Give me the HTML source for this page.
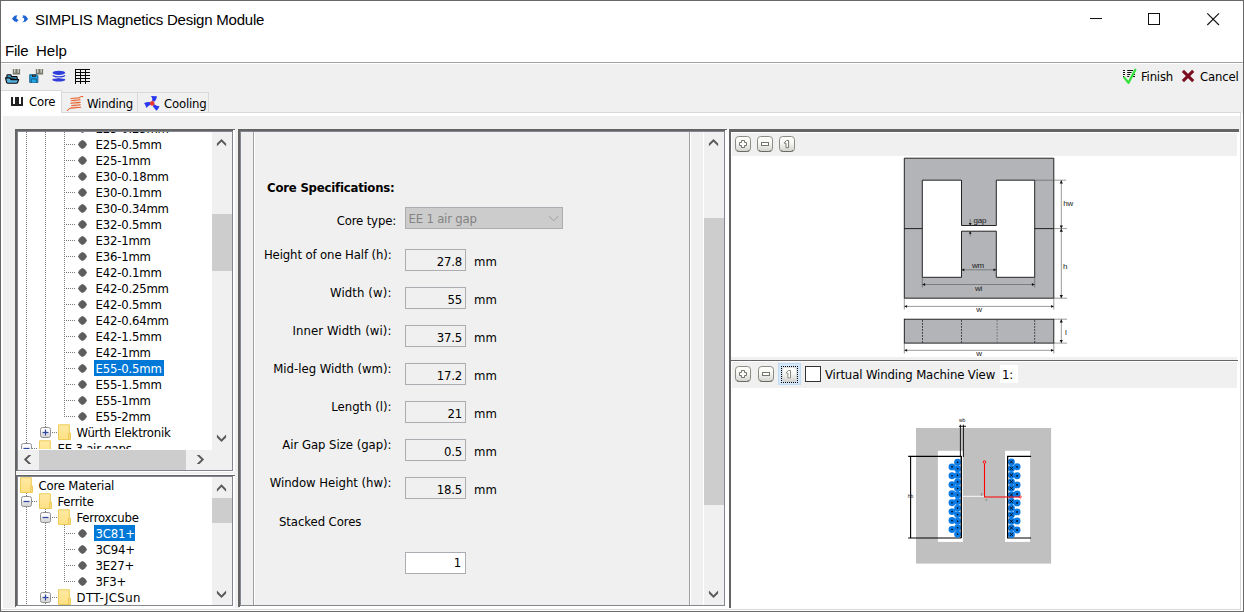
<!DOCTYPE html>
<html><head><meta charset="utf-8"><title>SIMPLIS Magnetics Design Module</title>
<style>
*{box-sizing:border-box;margin:0;padding:0}
html,body{width:1244px;height:612px;overflow:hidden;background:#f0f0f0}
body{position:relative;font-family:"DejaVu Sans Condensed","DejaVu Sans","Liberation Sans",sans-serif;font-stretch:condensed;font-size:13px;color:#000;letter-spacing:-0.2px}
.a{position:absolute}
.t{position:absolute;white-space:nowrap;line-height:16px;height:16px}
.ui{font-family:"Liberation Sans",sans-serif;font-size:15px;letter-spacing:-0.22px}
/* window */
#titlebar{left:1px;top:1px;width:1242px;height:61px;background:#fff}
#menuline{left:1px;top:62px;width:1242px;height:1px;background:#a0a0a0}
#bt{left:0;top:0;width:1244px;height:1px;background:#686868}
#bl{left:0;top:0;width:1px;height:612px;background:#686868}
#br{left:1243px;top:0;width:1px;height:612px;background:#686868}
#bb{left:0;top:611px;width:1244px;height:1px;background:#686868}

.vd{width:1px;background:repeating-linear-gradient(to bottom,#7a7a7a 0,#7a7a7a 1px,transparent 1px,transparent 2px)}
.hd{height:1px;background:repeating-linear-gradient(to right,#7a7a7a 0,#7a7a7a 1px,transparent 1px,transparent 2px)}
.sel{background:#0078d7;color:#fff}
.dk{background:#646464}.bl{background:#828790}.wh{background:#fff}
.sb{background:#f0f0f0}.th{background:#cdcdcd}
.r{text-align:right}
.inp{width:61px;height:22px;border:1px solid #abadb3;background:#f0f0f0}
</style></head><body>
<div class="a" id="titlebar"></div>
<div class="a" id="menuline"></div><div class="a wh" style="left:1px;top:63px;width:1242px;height:1px"></div>
<div class="t ui" style="left:35px;top:12px">SIMPLIS Magnetics Design Module</div>
<div class="t ui" style="left:5px;top:43px">File</div>
<div class="t ui" style="left:36px;top:43px;letter-spacing:0">Help</div>

<svg class="a" style="left:10px;top:12px" width="22" height="14" viewBox="10 12 22 14">
 <path d="M17.600 15.200L14.500 15.800L12 18.700L14.300 21.300L17.800 22.600L16.800 21.300L18.700 20.400L16.500 18.600Q15.800 17 17.600 15.200Z" fill="#1e64d2"/>
 <path d="M22.500 15.200L25.600 15.800L28.100 18.900L25.800 21.500L22.200 22.600Q24.800 20.800 24.200 18.800Q23.800 17.400 21.800 17.300L23.200 16.400Z" fill="#1e64d2"/>
</svg>
<svg class="a" style="left:1080px;top:8px" width="150" height="24" viewBox="1080 8 150 24">
 <path d="M1090 18.500H1102" stroke="#111" stroke-width="1"/>
 <rect x="1148.500" y="13.500" width="11" height="11" fill="none" stroke="#111" stroke-width="1"/>
 <path d="M1207.300 13.300L1219 25M1219 13.300L1207.300 25" stroke="#111" stroke-width="1.100"/>
</svg>
<!-- toolbar icons -->
<svg class="a" style="left:4px;top:67px" width="90" height="19" viewBox="4 67 90 19">
 <!-- open -->
 <g>
  <path d="M12.800 69h1.500v3.800h1v-3.800h2.300v3.800h1v-3.800h1.500v5.600h-7.300z" fill="#77776b"/>
  <path d="M6.900 78v-2.400q0-.9.900-.9h2.500q.9 0 1 .9l.1 1h5q.8 0 .8.800v2.200z" fill="#3f9dcc" stroke="#0c0c0c" stroke-width="1.100"/>
  <path d="M5.500 77.900h4.500l.9 1.700h7.800l-1.100 2.900q-.3.800-1.100.8h-8.500q-1 0-1.300-.8z" fill="#56aedb" stroke="#0c0c0c" stroke-width="1.100" stroke-linejoin="round"/>
 </g>
 <!-- save -->
 <g>
  <path d="M35.800 69h1.500v3.800h1v-3.800h2.300v3.800h1v-3.800h1.500v5.600h-7.300z" fill="#77776b"/>
  <path d="M29.700 74.700h7.200l1 1v6.800h-8.200z" fill="#1e9cdb" stroke="#145f88" stroke-width=".9"/>
  <rect x="32" y="74.700" width="3.800" height="2.100" fill="#1c1c1c"/>
  <rect x="33.300" y="75" width="1.200" height="1.300" fill="#777"/>
  <path d="M31.500 82.500v-3.500h4.800v3.500" fill="#25a6e6" stroke="#145f88" stroke-width=".9"/>
 </g>
 <!-- db -->
 <g fill="#2f3fdc">
  <ellipse cx="58.900" cy="72.800" rx="6.300" ry="2.150"/>
  <path d="M52.600 74.900q6.300 2.700 12.500 0l0 1.400q-6.200 3.400-12.500 0z"/>
  <ellipse cx="58.800" cy="79.800" rx="6.500" ry="1.750"/>
 </g>
 <path d="M53.500 78.400q5.300-1.600 10.600 0" fill="none" stroke="#f0f0f0" stroke-width=".7"/>
 <!-- grid -->
 <g fill="#050505" shape-rendering="crispEdges">
  <rect x="75" y="69" width="15" height="1"/><rect x="75" y="72" width="15" height="1"/><rect x="75" y="75" width="15" height="1"/><rect x="75" y="78" width="15" height="1"/><rect x="75" y="81" width="15" height="1"/>
  <rect x="75" y="69" width="1" height="15"/><rect x="80" y="69" width="1" height="15"/><rect x="85" y="69" width="1" height="15"/>
 </g>
</svg>
<!-- finish / cancel -->
<svg class="a" style="left:1120px;top:67px" width="80" height="19" viewBox="1120 67 80 19">
 <path d="M1123 70.500h2M1127.200 70.500h5.800M1123 72.500h2M1127.200 72.500h4.300M1123 74.500h2M1127.200 74.500h3M1133.500 74.500h1.500M1123 76.500h1.200M1127.200 76.500h2M1132.500 76.500h2.500" stroke="#111" stroke-width="1"/>
 <path d="M1124.300 77.600l4.200 5.200 6.800-13" fill="none" stroke="#35e23a" stroke-width="2.300" stroke-linejoin="round" stroke-linecap="round"/>
 <path d="M1182.900 70.900l10.300 10.200M1193.200 70.900l-10.300 10.200" stroke="#7a0e20" stroke-width="3"/>
</svg>
<div class="t" style="left:1141px;top:69px">Finish</div>
<div class="t" style="left:1200px;top:69px">Cancel</div>


<!-- tab pane -->
<div class="a" style="left:1px;top:112px;width:1240px;height:498px;background:#fff;border-right:1px solid #d9d9d9;border-bottom:1px solid #d9d9d9;border-top:1px solid #d9d9d9"></div>
<div class="a" style="left:3px;top:116px;width:1237px;height:492px;background:#f0f0f0"></div>
<div class="a wh" style="left:1241px;top:113px;width:2px;height:498px"></div><div class="a wh" style="left:1px;top:610px;width:1242px;height:1px"></div>
<!-- tabs -->
<div class="a" style="left:1px;top:90px;width:61px;height:23px;background:#fff;border-top:1px solid #d9d9d9;border-right:1px solid #d9d9d9"></div>
<div class="a" style="left:62px;top:92px;width:76px;height:20px;border-top:1px solid #d9d9d9;border-right:1px solid #d9d9d9"></div>
<div class="a" style="left:138px;top:92px;width:71px;height:20px;border-top:1px solid #d9d9d9;border-right:1px solid #d9d9d9"></div>
<svg class="a" style="left:10px;top:95px" width="152" height="17" viewBox="10 95 152 17">
 <path d="M11 97h2v7h2v-7h4v7h2v-7h2v9h-12z" fill="#222"/>
 <g fill="none" stroke="#e8632f" stroke-width="1.100" stroke-linecap="round">
  <path d="M70.800 98.500L79.300 97.700Q80.200 96.100 82.800 96.600M71.200 100.700L80 99.700M70.900 103.300L80.200 102.400M71.600 105.700L80.200 104.800M71 108.100L80.700 107.300M71.500 107.800Q69.300 108.300 67.400 110.500"/>
  <path d="M79.500 97.900L71.200 100.500M80 99.900L71 103.100M80.200 102.600L71.600 105.500M80.200 105L71 107.900" opacity=".28"/>
 </g>
 <g fill="#2c38ee">
  <path d="M150.900 96.100L157 96.200Q156.800 98.600 154.800 101.600L152.300 101.200Q153.300 98.500 150.900 96.100Z"/>
  <path d="M144.100 102.900Q147 101.800 149.900 102L150.600 104.700Q148 105.600 146.500 108.100Q145.800 105.300 144.100 102.900Z"/>
  <path d="M154.500 104.200Q156.500 106.200 159.500 106.300Q158.500 109 156.400 110.800Q154.500 108.300 152.700 106.300Z"/>
 </g>
 <circle cx="152.200" cy="103.400" r="2.300" fill="#ea3333"/>
</svg>
<div class="t" style="left:29px;top:94px">Core</div>
<div class="t" style="left:87px;top:96px">Winding</div>
<div class="t" style="left:164px;top:96px">Cooling</div>

<svg width="0" height="0" style="position:absolute"><defs>
<linearGradient id="fg" x1="0" y1="0" x2="0" y2="1"><stop offset="0" stop-color="#ffeaa4"/><stop offset="1" stop-color="#ffe083"/></linearGradient>
<linearGradient id="bg" x1="0" y1="0" x2="0" y2="1"><stop offset="0" stop-color="#ffffff"/><stop offset=".5" stop-color="#f4f4f4"/><stop offset=".55" stop-color="#e2e2e2"/><stop offset="1" stop-color="#d4d4d4"/></linearGradient>
<linearGradient id="btn" x1="0" y1="0" x2="0" y2="1"><stop offset="0" stop-color="#ffffff"/><stop offset=".45" stop-color="#f6f6f4"/><stop offset="1" stop-color="#d2d2ce"/></linearGradient>
</defs></svg>

<!-- left frames -->
<div class="a dk" style="left:15px;top:129px;width:220px;height:1px"></div>
<div class="a dk" style="left:15px;top:130px;width:218px;height:1px"></div>
<div class="a dk" style="left:15px;top:129px;width:1px;height:478px"></div>
<div class="a dk" style="left:16px;top:129px;width:1px;height:342px"></div>
<div class="a dk" style="left:16px;top:475px;width:1px;height:132px"></div>
<div class="a wh" style="left:233px;top:130px;width:2px;height:478px"></div>
<div class="a wh" style="left:16px;top:471px;width:219px;height:1px"></div>
<div class="a" style="left:16px;top:472px;width:219px;height:2px;background:#f0f0f0"></div>
<div class="a wh" style="left:16px;top:474px;width:219px;height:1px"></div>
<div class="a dk" style="left:15px;top:475px;width:220px;height:1px"></div>
<div class="a wh" style="left:16px;top:606px;width:219px;height:2px"></div>
<div class="a" style="left:17px;top:131px;width:216px;height:340px;border:1px solid #828790;background:#fff"></div>
<div class="a" style="left:17px;top:476px;width:216px;height:130px;border:1px solid #828790;background:#fff"></div>
<div class="a" style="left:18px;top:132px;width:194px;height:317px;background:#fff;overflow:hidden">
<div class="a hd" style="left:46px;top:-4px;width:12px"></div>
<svg class="a" style="left:60px;top:-8px" width="9" height="9" viewBox="0 0 9 9"><circle cx="4.500" cy="4.500" r="3.700" fill="#5e5e5e"/><path d="M4.500 .2v8.600M.2 4.500h8.600" stroke="#5e5e5e" stroke-width="2.200"/></svg>
<div class="t" style="left:77.5px;top:-11px">E25-0.25mm</div>
<div class="a hd" style="left:46px;top:12px;width:12px"></div>
<svg class="a" style="left:60px;top:8px" width="9" height="9" viewBox="0 0 9 9"><circle cx="4.500" cy="4.500" r="3.700" fill="#5e5e5e"/><path d="M4.500 .2v8.600M.2 4.500h8.600" stroke="#5e5e5e" stroke-width="2.200"/></svg>
<div class="t" style="left:77.5px;top:5px">E25-0.5mm</div>
<div class="a hd" style="left:46px;top:28px;width:12px"></div>
<svg class="a" style="left:60px;top:24px" width="9" height="9" viewBox="0 0 9 9"><circle cx="4.500" cy="4.500" r="3.700" fill="#5e5e5e"/><path d="M4.500 .2v8.600M.2 4.500h8.600" stroke="#5e5e5e" stroke-width="2.200"/></svg>
<div class="t" style="left:77.5px;top:21px">E25-1mm</div>
<div class="a hd" style="left:46px;top:44px;width:12px"></div>
<svg class="a" style="left:60px;top:40px" width="9" height="9" viewBox="0 0 9 9"><circle cx="4.500" cy="4.500" r="3.700" fill="#5e5e5e"/><path d="M4.500 .2v8.600M.2 4.500h8.600" stroke="#5e5e5e" stroke-width="2.200"/></svg>
<div class="t" style="left:77.5px;top:37px">E30-0.18mm</div>
<div class="a hd" style="left:46px;top:60px;width:12px"></div>
<svg class="a" style="left:60px;top:56px" width="9" height="9" viewBox="0 0 9 9"><circle cx="4.500" cy="4.500" r="3.700" fill="#5e5e5e"/><path d="M4.500 .2v8.600M.2 4.500h8.600" stroke="#5e5e5e" stroke-width="2.200"/></svg>
<div class="t" style="left:77.5px;top:53px">E30-0.1mm</div>
<div class="a hd" style="left:46px;top:76px;width:12px"></div>
<svg class="a" style="left:60px;top:72px" width="9" height="9" viewBox="0 0 9 9"><circle cx="4.500" cy="4.500" r="3.700" fill="#5e5e5e"/><path d="M4.500 .2v8.600M.2 4.500h8.600" stroke="#5e5e5e" stroke-width="2.200"/></svg>
<div class="t" style="left:77.5px;top:69px">E30-0.34mm</div>
<div class="a hd" style="left:46px;top:92px;width:12px"></div>
<svg class="a" style="left:60px;top:88px" width="9" height="9" viewBox="0 0 9 9"><circle cx="4.500" cy="4.500" r="3.700" fill="#5e5e5e"/><path d="M4.500 .2v8.600M.2 4.500h8.600" stroke="#5e5e5e" stroke-width="2.200"/></svg>
<div class="t" style="left:77.5px;top:85px">E32-0.5mm</div>
<div class="a hd" style="left:46px;top:108px;width:12px"></div>
<svg class="a" style="left:60px;top:104px" width="9" height="9" viewBox="0 0 9 9"><circle cx="4.500" cy="4.500" r="3.700" fill="#5e5e5e"/><path d="M4.500 .2v8.600M.2 4.500h8.600" stroke="#5e5e5e" stroke-width="2.200"/></svg>
<div class="t" style="left:77.5px;top:101px">E32-1mm</div>
<div class="a hd" style="left:46px;top:124px;width:12px"></div>
<svg class="a" style="left:60px;top:120px" width="9" height="9" viewBox="0 0 9 9"><circle cx="4.500" cy="4.500" r="3.700" fill="#5e5e5e"/><path d="M4.500 .2v8.600M.2 4.500h8.600" stroke="#5e5e5e" stroke-width="2.200"/></svg>
<div class="t" style="left:77.5px;top:117px">E36-1mm</div>
<div class="a hd" style="left:46px;top:140px;width:12px"></div>
<svg class="a" style="left:60px;top:136px" width="9" height="9" viewBox="0 0 9 9"><circle cx="4.500" cy="4.500" r="3.700" fill="#5e5e5e"/><path d="M4.500 .2v8.600M.2 4.500h8.600" stroke="#5e5e5e" stroke-width="2.200"/></svg>
<div class="t" style="left:77.5px;top:133px">E42-0.1mm</div>
<div class="a hd" style="left:46px;top:156px;width:12px"></div>
<svg class="a" style="left:60px;top:152px" width="9" height="9" viewBox="0 0 9 9"><circle cx="4.500" cy="4.500" r="3.700" fill="#5e5e5e"/><path d="M4.500 .2v8.600M.2 4.500h8.600" stroke="#5e5e5e" stroke-width="2.200"/></svg>
<div class="t" style="left:77.5px;top:149px">E42-0.25mm</div>
<div class="a hd" style="left:46px;top:172px;width:12px"></div>
<svg class="a" style="left:60px;top:168px" width="9" height="9" viewBox="0 0 9 9"><circle cx="4.500" cy="4.500" r="3.700" fill="#5e5e5e"/><path d="M4.500 .2v8.600M.2 4.500h8.600" stroke="#5e5e5e" stroke-width="2.200"/></svg>
<div class="t" style="left:77.5px;top:165px">E42-0.5mm</div>
<div class="a hd" style="left:46px;top:188px;width:12px"></div>
<svg class="a" style="left:60px;top:184px" width="9" height="9" viewBox="0 0 9 9"><circle cx="4.500" cy="4.500" r="3.700" fill="#5e5e5e"/><path d="M4.500 .2v8.600M.2 4.500h8.600" stroke="#5e5e5e" stroke-width="2.200"/></svg>
<div class="t" style="left:77.5px;top:181px">E42-0.64mm</div>
<div class="a hd" style="left:46px;top:204px;width:12px"></div>
<svg class="a" style="left:60px;top:200px" width="9" height="9" viewBox="0 0 9 9"><circle cx="4.500" cy="4.500" r="3.700" fill="#5e5e5e"/><path d="M4.500 .2v8.600M.2 4.500h8.600" stroke="#5e5e5e" stroke-width="2.200"/></svg>
<div class="t" style="left:77.5px;top:197px">E42-1.5mm</div>
<div class="a hd" style="left:46px;top:220px;width:12px"></div>
<svg class="a" style="left:60px;top:216px" width="9" height="9" viewBox="0 0 9 9"><circle cx="4.500" cy="4.500" r="3.700" fill="#5e5e5e"/><path d="M4.500 .2v8.600M.2 4.500h8.600" stroke="#5e5e5e" stroke-width="2.200"/></svg>
<div class="t" style="left:77.5px;top:213px">E42-1mm</div>
<div class="a hd" style="left:46px;top:236px;width:12px"></div>
<svg class="a" style="left:60px;top:232px" width="9" height="9" viewBox="0 0 9 9"><circle cx="4.500" cy="4.500" r="3.700" fill="#5e5e5e"/><path d="M4.500 .2v8.600M.2 4.500h8.600" stroke="#5e5e5e" stroke-width="2.200"/></svg>
<div class="a sel" style="left:76px;top:228px;width:70px;height:16px"></div><div class="t" style="left:77.5px;top:229px;color:#fff">E55-0.5mm</div>
<div class="a hd" style="left:46px;top:252px;width:12px"></div>
<svg class="a" style="left:60px;top:248px" width="9" height="9" viewBox="0 0 9 9"><circle cx="4.500" cy="4.500" r="3.700" fill="#5e5e5e"/><path d="M4.500 .2v8.600M.2 4.500h8.600" stroke="#5e5e5e" stroke-width="2.200"/></svg>
<div class="t" style="left:77.5px;top:245px">E55-1.5mm</div>
<div class="a hd" style="left:46px;top:268px;width:12px"></div>
<svg class="a" style="left:60px;top:264px" width="9" height="9" viewBox="0 0 9 9"><circle cx="4.500" cy="4.500" r="3.700" fill="#5e5e5e"/><path d="M4.500 .2v8.600M.2 4.500h8.600" stroke="#5e5e5e" stroke-width="2.200"/></svg>
<div class="t" style="left:77.5px;top:261px">E55-1mm</div>
<div class="a hd" style="left:46px;top:284px;width:12px"></div>
<svg class="a" style="left:60px;top:280px" width="9" height="9" viewBox="0 0 9 9"><circle cx="4.500" cy="4.500" r="3.700" fill="#5e5e5e"/><path d="M4.500 .2v8.600M.2 4.500h8.600" stroke="#5e5e5e" stroke-width="2.200"/></svg>
<div class="t" style="left:77.5px;top:277px">E55-2mm</div>
<div class="a vd" style="left:8px;top:0px;height:317px"></div>
<div class="a vd" style="left:27px;top:0px;height:295px"></div>
<div class="a vd" style="left:46px;top:0px;height:285px"></div>
<svg class="a" style="left:22px;top:295px" width="11" height="11" viewBox="0 0 11 11"><rect x=".5" y=".5" width="10" height="10" rx="2" fill="url(#bg)" stroke="#8f8f8f"/><path d="M2.500 5.500h6" stroke="#2c47a0" stroke-width="1.200"/><path d="M5.500 2.500v6" stroke="#2c47a0" stroke-width="1.200"/></svg>
<div class="a hd" style="left:34px;top:300px;width:5px"></div>
<svg class="a" style="left:40px;top:292px" width="13" height="16" viewBox="0 0 13 16"><path d="M.5.800h10.800v8.500h1.200v6.200h-12z" fill="url(#fg)" stroke="#edcb58" stroke-width="1"/><path d="M10.700 15.300v-5.300q0-.7.800-.7h.8" fill="none" stroke="#e9c550" stroke-width="1"/></svg>
<div class="t" style="left:58.5px;top:293px">Würth Elektronik</div>
<svg class="a" style="left:3px;top:311px" width="11" height="11" viewBox="0 0 11 11"><rect x=".5" y=".5" width="10" height="10" rx="2" fill="url(#bg)" stroke="#8f8f8f"/><path d="M2.500 5.500h6" stroke="#2c47a0" stroke-width="1.200"/></svg>
<div class="a hd" style="left:14px;top:316px;width:6px"></div>
<svg class="a" style="left:21px;top:308px" width="13" height="16" viewBox="0 0 13 16"><path d="M.5.800h10.800v8.500h1.200v6.200h-12z" fill="url(#fg)" stroke="#edcb58" stroke-width="1"/><path d="M10.700 15.300v-5.300q0-.7.800-.7h.8" fill="none" stroke="#e9c550" stroke-width="1"/></svg>
<div class="t" style="left:39.5px;top:309px">EE 3 air gaps</div>
</div>
<div class="a" style="left:18px;top:477px;width:194px;height:128px;background:#fff;overflow:hidden">
<svg class="a" style="left:2px;top:0px" width="13" height="16" viewBox="0 0 13 16"><path d="M.5.800h10.800v8.500h1.200v6.200h-12z" fill="url(#fg)" stroke="#edcb58" stroke-width="1"/><path d="M10.700 15.300v-5.300q0-.7.800-.7h.8" fill="none" stroke="#e9c550" stroke-width="1"/></svg>
<div class="t" style="left:20.5px;top:1px">Core Material</div>
<div class="a vd" style="left:8px;top:16px;height:3px"></div>
<svg class="a" style="left:3px;top:19px" width="11" height="11" viewBox="0 0 11 11"><rect x=".5" y=".5" width="10" height="10" rx="2" fill="url(#bg)" stroke="#8f8f8f"/><path d="M2.500 5.500h6" stroke="#2c47a0" stroke-width="1.200"/></svg>
<div class="a hd" style="left:14px;top:24px;width:6px"></div>
<svg class="a" style="left:21px;top:16px" width="13" height="16" viewBox="0 0 13 16"><path d="M.5.800h10.800v8.500h1.200v6.200h-12z" fill="url(#fg)" stroke="#edcb58" stroke-width="1"/><path d="M10.700 15.300v-5.300q0-.7.800-.7h.8" fill="none" stroke="#e9c550" stroke-width="1"/></svg>
<div class="t" style="left:39.5px;top:17px">Ferrite</div>
<div class="a vd" style="left:8px;top:30px;height:98px"></div>
<div class="a vd" style="left:27px;top:32px;height:3px"></div>
<svg class="a" style="left:22px;top:35px" width="11" height="11" viewBox="0 0 11 11"><rect x=".5" y=".5" width="10" height="10" rx="2" fill="url(#bg)" stroke="#8f8f8f"/><path d="M2.500 5.500h6" stroke="#2c47a0" stroke-width="1.200"/></svg>
<div class="a hd" style="left:34px;top:40px;width:5px"></div>
<svg class="a" style="left:40px;top:32px" width="13" height="16" viewBox="0 0 13 16"><path d="M.5.800h10.800v8.500h1.200v6.200h-12z" fill="url(#fg)" stroke="#edcb58" stroke-width="1"/><path d="M10.700 15.300v-5.300q0-.7.800-.7h.8" fill="none" stroke="#e9c550" stroke-width="1"/></svg>
<div class="t" style="left:58.5px;top:33px">Ferroxcube</div>
<div class="a vd" style="left:27px;top:46px;height:69px"></div>
<div class="a hd" style="left:46px;top:56px;width:12px"></div>
<svg class="a" style="left:60px;top:52px" width="9" height="9" viewBox="0 0 9 9"><circle cx="4.500" cy="4.500" r="3.700" fill="#5e5e5e"/><path d="M4.500 .2v8.600M.2 4.500h8.600" stroke="#5e5e5e" stroke-width="2.200"/></svg>
<div class="a sel" style="left:76px;top:48px;width:41px;height:16px"></div><div class="t" style="left:77.5px;top:49px;color:#fff">3C81+</div>
<div class="a hd" style="left:46px;top:72px;width:12px"></div>
<svg class="a" style="left:60px;top:68px" width="9" height="9" viewBox="0 0 9 9"><circle cx="4.500" cy="4.500" r="3.700" fill="#5e5e5e"/><path d="M4.500 .2v8.600M.2 4.500h8.600" stroke="#5e5e5e" stroke-width="2.200"/></svg>
<div class="t" style="left:77.5px;top:65px">3C94+</div>
<div class="a hd" style="left:46px;top:88px;width:12px"></div>
<svg class="a" style="left:60px;top:84px" width="9" height="9" viewBox="0 0 9 9"><circle cx="4.500" cy="4.500" r="3.700" fill="#5e5e5e"/><path d="M4.500 .2v8.600M.2 4.500h8.600" stroke="#5e5e5e" stroke-width="2.200"/></svg>
<div class="t" style="left:77.5px;top:81px">3E27+</div>
<div class="a hd" style="left:46px;top:104px;width:12px"></div>
<svg class="a" style="left:60px;top:100px" width="9" height="9" viewBox="0 0 9 9"><circle cx="4.500" cy="4.500" r="3.700" fill="#5e5e5e"/><path d="M4.500 .2v8.600M.2 4.500h8.600" stroke="#5e5e5e" stroke-width="2.200"/></svg>
<div class="t" style="left:77.5px;top:97px">3F3+</div>
<div class="a vd" style="left:46px;top:48px;height:57px"></div>
<svg class="a" style="left:22px;top:115px" width="11" height="11" viewBox="0 0 11 11"><rect x=".5" y=".5" width="10" height="10" rx="2" fill="url(#bg)" stroke="#8f8f8f"/><path d="M2.500 5.500h6" stroke="#2c47a0" stroke-width="1.200"/><path d="M5.500 2.500v6" stroke="#2c47a0" stroke-width="1.200"/></svg>
<div class="a hd" style="left:34px;top:120px;width:5px"></div>
<svg class="a" style="left:40px;top:112px" width="13" height="16" viewBox="0 0 13 16"><path d="M.5.800h10.800v8.500h1.200v6.200h-12z" fill="url(#fg)" stroke="#edcb58" stroke-width="1"/><path d="M10.700 15.300v-5.300q0-.7.800-.7h.8" fill="none" stroke="#e9c550" stroke-width="1"/></svg>
<div class="t" style="letter-spacing:.4px;left:58.5px;top:113px">DTT-JCSun</div>
<div class="a vd" style="left:27px;top:126px;height:2px"></div>
</div>
<!-- scrollbars -->
<div class="a sb" style="left:212px;top:132px;width:20px;height:338px"></div>
<div class="a th" style="left:212px;top:214px;width:20px;height:57px"></div>
<div class="a sb" style="left:18px;top:450px;width:194px;height:20px"></div>
<div class="a th" style="left:39px;top:450px;width:147px;height:20px"></div>
<div class="a sb" style="left:212px;top:477px;width:20px;height:128px"></div>
<div class="a th" style="left:212px;top:498px;width:20px;height:25px"></div>
<!-- middle panel -->
<div class="a wh" style="left:725px;top:129px;width:4px;height:3px"></div><div class="a dk" style="left:238px;top:129px;width:489px;height:1px"></div><div class="a dk" style="left:238px;top:130px;width:487px;height:1px"></div>
<div class="a dk" style="left:238px;top:129px;width:2px;height:478px"></div>
<div class="a wh" style="left:725px;top:131px;width:4px;height:477px"></div>
<div class="a wh" style="left:240px;top:606px;width:489px;height:2px"></div>
<div class="a" style="left:240px;top:131px;width:485px;height:475px;border:1px solid #828790;background:#f0f0f0"></div>
<div class="a" style="left:253px;top:132px;width:1px;height:473px;background:#a0a0a0"></div>
<div class="a wh" style="left:254px;top:132px;width:1px;height:473px"></div>
<div class="a" style="left:689px;top:132px;width:1px;height:473px;background:#a0a0a0"></div>
<div class="a wh" style="left:690px;top:132px;width:1px;height:473px"></div>
<div class="a wh" style="left:703px;top:132px;width:1px;height:473px"></div>
<div class="a th" style="left:704px;top:218px;width:20px;height:287px"></div>
<!-- form -->
<div class="t" style="left:267px;top:180px;font-weight:bold">Core Specifications:</div>
<div class="t r" style="left:255px;width:141px;top:213px;letter-spacing:-0.15px">Core type:</div>
<div class="a" style="left:405px;top:207px;width:158px;height:22px;background:#cccccc;border:1px solid #abadb3"></div>
<div class="t" style="left:408.500px;top:211px;color:#838383">EE 1 air gap</div>
<svg class="a" style="left:547px;top:214px" width="13" height="9" viewBox="547 214 13 9"><path d="M549 216.200l4.600 4.600 4.600-4.600" fill="none" stroke="#9e9e9e" stroke-width="1"/></svg>
<!-- rows -->
<div class="t r" style="left:255px;width:136.500px;top:246.5px;letter-spacing:-0.12px">Height of one Half (h):</div>
<div class="a inp" style="left:405px;top:249px"></div><div class="t r" style="left:405px;width:57px;top:253.5px">27.8</div>
<div class="t" style="left:474px;top:253.5px;letter-spacing:0">mm</div>
<div class="t r" style="left:255px;width:136.500px;top:284.5px;letter-spacing:0.12px">Width (w):</div>
<div class="a inp" style="left:405px;top:287px"></div><div class="t r" style="left:405px;width:57px;top:291.5px">55</div>
<div class="t" style="left:474px;top:291.5px;letter-spacing:0">mm</div>
<div class="t r" style="left:255px;width:136.500px;top:322.5px;letter-spacing:0.09px">Inner Width (wi):</div>
<div class="a inp" style="left:405px;top:325px"></div><div class="t r" style="left:405px;width:57px;top:329.5px">37.5</div>
<div class="t" style="left:474px;top:329.5px;letter-spacing:0">mm</div>
<div class="t r" style="left:255px;width:136.500px;top:360.5px;letter-spacing:0px">Mid-leg Width (wm):</div>
<div class="a inp" style="left:405px;top:363px"></div><div class="t r" style="left:405px;width:57px;top:367.5px">17.2</div>
<div class="t" style="left:474px;top:367.5px;letter-spacing:0">mm</div>
<div class="t r" style="left:255px;width:136.500px;top:398.5px;letter-spacing:-0.02px">Length (l):</div>
<div class="a inp" style="left:405px;top:401px"></div><div class="t r" style="left:405px;width:57px;top:405.5px">21</div>
<div class="t" style="left:474px;top:405.5px;letter-spacing:0">mm</div>
<div class="t r" style="left:255px;width:136.500px;top:436.5px;letter-spacing:-0.04px">Air Gap Size (gap):</div>
<div class="a inp" style="left:405px;top:439px"></div><div class="t r" style="left:405px;width:57px;top:443.5px">0.5</div>
<div class="t" style="left:474px;top:443.5px;letter-spacing:0">mm</div>
<div class="t r" style="left:255px;width:136.500px;top:474.5px;letter-spacing:-0.02px">Window Height (hw):</div>
<div class="a inp" style="left:405px;top:477px"></div><div class="t r" style="left:405px;width:57px;top:481.5px">18.5</div>
<div class="t" style="left:474px;top:481.5px;letter-spacing:0">mm</div>
<div class="t" style="left:279px;top:513.500px;letter-spacing:-0.08px">Stacked Cores</div>
<div class="a inp" style="left:405px;top:552px;background:#fff"></div><div class="t r" style="left:405px;width:56px;top:555px">1</div>
<!-- right panel -->
<div class="a wh" style="left:731px;top:132px;width:509px;height:476px"></div>
<div class="a dk" style="left:729px;top:129px;width:510px;height:3px"></div>
<div class="a dk" style="left:729px;top:129px;width:2px;height:479px"></div>
<div class="a" style="left:732px;top:133px;width:505px;height:23px;background:#f0f0f0"></div>
<div class="a" style="left:731px;top:357px;width:506px;height:3px;background:#f0f0f0"></div>
<div class="a dk" style="left:730px;top:360px;width:508px;height:1px"></div>
<div class="a" style="left:732px;top:362px;width:505px;height:26px;background:#f0f0f0"></div>
<svg class="a" style="left:735px;top:136px" width="16" height="16" viewBox="0 0 16 16"><rect x=".5" y=".5" width="15" height="15" rx="3.200" fill="url(#btn)" stroke="#8c8c84"/><path d="M2 14.500q1 1 2.500 1h7q1.500 0 2.500-1" fill="none" stroke="#6a6a62" stroke-width="1"/><path d="M6.500 4.500h3v2h2v3h-2v2h-3v-2h-2v-3h2z" fill="#fff" stroke="#74746c" stroke-width="1"/></svg>
<svg class="a" style="left:757px;top:136px" width="16" height="16" viewBox="0 0 16 16"><rect x=".5" y=".5" width="15" height="15" rx="3.200" fill="url(#btn)" stroke="#8c8c84"/><path d="M2 14.500q1 1 2.500 1h7q1.500 0 2.500-1" fill="none" stroke="#6a6a62" stroke-width="1"/><rect x="4.500" y="6.500" width="7" height="3" fill="#fff" stroke="#74746c" stroke-width="1"/></svg>
<svg class="a" style="left:779px;top:136px" width="16" height="16" viewBox="0 0 16 16"><rect x=".5" y=".5" width="15" height="15" rx="3.200" fill="url(#btn)" stroke="#8c8c84"/><path d="M2 14.500q1 1 2.500 1h7q1.500 0 2.500-1" fill="none" stroke="#6a6a62" stroke-width="1"/><path d="M5.300 6.600l2.200-2.100h2.100v7.200h-2.600v-4.500h-1.700z" fill="#fff" stroke="#74746c" stroke-width="1"/></svg>
<svg class="a" style="left:735px;top:366px" width="16" height="16" viewBox="0 0 16 16"><rect x=".5" y=".5" width="15" height="15" rx="3.200" fill="url(#btn)" stroke="#8c8c84"/><path d="M2 14.500q1 1 2.500 1h7q1.500 0 2.500-1" fill="none" stroke="#6a6a62" stroke-width="1"/><path d="M6.500 4.500h3v2h2v3h-2v2h-3v-2h-2v-3h2z" fill="#fff" stroke="#74746c" stroke-width="1"/></svg>
<svg class="a" style="left:758px;top:366px" width="16" height="16" viewBox="0 0 16 16"><rect x=".5" y=".5" width="15" height="15" rx="3.200" fill="url(#btn)" stroke="#8c8c84"/><path d="M2 14.500q1 1 2.500 1h7q1.500 0 2.500-1" fill="none" stroke="#6a6a62" stroke-width="1"/><rect x="4.500" y="6.500" width="7" height="3" fill="#fff" stroke="#74746c" stroke-width="1"/></svg>
<div class="a" style="left:778px;top:363px;width:23px;height:22px;background:#d4e8f9;border:1px solid #c0ddf5"></div>
<svg class="a" style="left:782px;top:367px" width="15" height="15" viewBox="0 0 15 15"><rect x=".3" y=".3" width="14.400" height="14.400" rx="3.200" fill="url(#btn)" stroke="#c9c9c4" stroke-width=".6"/><path d="M4.200 5.600l2.200-2.100h2.100v7.400h-2.600v-4.700h-1.700z" fill="#fff" stroke="#8a8a82" stroke-width="1"/></svg>
<div class="a" style="left:781px;top:366px;width:17px;height:17px;border:1px dotted #000"></div>
<div class="a" style="left:805px;top:366px;width:16px;height:16px;border:1px solid #333;background:#fff"></div>
<div class="t" style="left:825px;top:366.500px;letter-spacing:-0.12px">Virtual Winding Machine View</div>
<div class="a wh" style="left:1000px;top:365px;width:18px;height:18px"></div>
<div class="t" style="left:1002px;top:366.500px">1:</div>
<svg class="a" style="left:731px;top:156px" width="506" height="200" viewBox="731 156 506 200" font-family="Liberation Sans, sans-serif" font-size="8" fill="#222">
<path d="M904.3 158.2H1053.8V298.2H904.3Z M922.3 180.2V277.3H961.5V231.2H996.3V277.3H1034.7V180.2H996.3V225.5H961.5V180.2Z" fill="#b2b4b7" fill-rule="evenodd" stroke="#111" stroke-width=".9"/>
<path d="M904.3 228.6H922.3M1034.7 228.6H1053.8" stroke="#111" stroke-width=".9"/>
<path d="M1034.7 180.2H1066M1053.8 228.6H1067M1053.8 298.2H1067M1061.3 180.2V298.2" stroke="#555" stroke-width=".6" fill="none"/>
<path d="M1061.3 180.2l-1.6 3.2h3.2zM1061.3 228.6l-1.6 -3.2h3.2zM1061.3 228.6l-1.6 3.2h3.2zM1061.3 298.2l-1.6 -3.2h3.2z" fill="#111"/>
<text x="1063.300" y="206.300">hw</text>
<text x="1063" y="268.500">h</text>
<path d="M970.200 219V225.5M970.200 231.2V236.500" stroke="#555" stroke-width=".6" fill="none"/>
<path d="M970.2 225.5l-1.4 -2.6h2.8zM970.2 231.2l-1.4 2.6h2.8z" fill="#111"/>
<text x="973.400" y="222.700">gap</text>
<path d="M961.5 269.800H996.3" stroke="#555" stroke-width=".6" fill="none"/>
<path d="M961.5 269.8l2.8 -1.4v2.8zM996.3 269.8l-2.8 -1.4v2.8z" fill="#111"/>
<text x="978" y="268" text-anchor="middle">wm</text>
<path d="M922.3 277.3V287.500M1034.7 277.3V287.500M922.3 284.500H1034.7" stroke="#555" stroke-width=".6" fill="none"/>
<path d="M922.3 284.5l2.8 -1.4v2.8zM1034.7 284.5l-2.8 -1.4v2.8z" fill="#111"/>
<text x="978.600" y="291.200" text-anchor="middle">wi</text>
<path d="M904.3 298.2V309.500M1053.8 298.2V309.500M904.3 306.400H1053.8" stroke="#555" stroke-width=".6" fill="none"/>
<path d="M904.3 306.4l2.8 -1.4v2.8zM1053.8 306.4l-2.8 -1.4v2.8z" fill="#111"/>
<text x="979" y="311.900" text-anchor="middle">w</text>
<rect x="904.3" y="319.200" width="149.5" height="23.900" fill="#b2b4b7" stroke="#111" stroke-width=".9"/>
<path d="M922.500 320V343M961.500 320V343M1034.700 320V343" stroke="#222" stroke-width=".8" stroke-dasharray="1.800 1.200"/>
<path d="M997.100 320V343" stroke="#6a6a6a" stroke-width=".8" stroke-dasharray="1.800 1.200"/>
<path d="M1053.8 319.200H1067M1053.8 343.100H1067M1061.3 319.200V343.100" stroke="#555" stroke-width=".6" fill="none"/>
<path d="M1061.3 319.2l-1.6 3.2h3.2zM1061.3 343.1l-1.6 -3.2h3.2z" fill="#111"/>
<text x="1065" y="335">l</text>
<path d="M904.3 343.100V353.500M1053.8 343.100V353.500M904.3 350.300H1053.8" stroke="#555" stroke-width=".6" fill="none"/>
<path d="M904.3 350.3l2.8 -1.4v2.8zM1053.8 350.3l-2.8 -1.4v2.8z" fill="#111"/>
<text x="979" y="355.800" text-anchor="middle">w</text>
</svg>
<svg class="a" style="left:731px;top:388px" width="506" height="219" viewBox="731 388 506 219" font-family="Liberation Sans, sans-serif" font-size="5" fill="#222">
<rect x="916" y="428" width="135.100" height="135.600" fill="#c0c0c0"/>
<rect x="937.900" y="450.800" width="25" height="91.100" fill="#fff"/>
<rect x="1005" y="450.800" width="25.100" height="91.100" fill="#fff"/>
<path d="M963 496.300H984.500" stroke="#fff" stroke-width=".9"/>
<path d="M908.200 456.400H961.300V538M908.200 538H961.300M910.600 456.400V538" fill="none" stroke="#000" stroke-width="1.100"/>
<path d="M960.400 424.700V456.400M963.400 424.700V457M959 426.300H966" fill="none" stroke="#000" stroke-width=".9"/>
<path d="M1031.100 456.400H1007.600V538H1031.100" fill="none" stroke="#000" stroke-width="1.100"/>
<text x="959" y="421.900">wb</text>
<text x="907.800" y="497.600">hb</text>
<text x="980.800" y="494.500" font-size="3.500" fill="#555">y</text>
<text x="985.500" y="500.500" font-size="3.500" fill="#555">x</text>
<g fill="#0d7be4"><circle cx="952" cy="466.9" r="3.450"/><circle cx="952" cy="475.8" r="3.450"/><circle cx="952" cy="484.8" r="3.450"/><circle cx="952" cy="493.7" r="3.450"/><circle cx="952" cy="502.7" r="3.450"/><circle cx="952" cy="511.6" r="3.450"/><circle cx="952" cy="520.5" r="3.450"/><circle cx="952" cy="529.5" r="3.450"/><circle cx="957.600" cy="462.3" r="3.450"/><circle cx="957.600" cy="468.8" r="3.450"/><circle cx="957.600" cy="475.4" r="3.450"/><circle cx="957.600" cy="481.9" r="3.450"/><circle cx="957.600" cy="488.5" r="3.450"/><circle cx="957.600" cy="495.0" r="3.450"/><circle cx="957.600" cy="501.5" r="3.450"/><circle cx="957.600" cy="508.1" r="3.450"/><circle cx="957.600" cy="514.6" r="3.450"/><circle cx="957.600" cy="521.2" r="3.450"/><circle cx="957.600" cy="527.7" r="3.450"/><circle cx="957.600" cy="534.2" r="3.450"/><circle cx="1011.400" cy="461.9" r="3.450"/><circle cx="1011.400" cy="468.5" r="3.450"/><circle cx="1011.400" cy="475.1" r="3.450"/><circle cx="1011.400" cy="481.7" r="3.450"/><circle cx="1011.400" cy="488.3" r="3.450"/><circle cx="1011.400" cy="494.9" r="3.450"/><circle cx="1011.400" cy="501.5" r="3.450"/><circle cx="1011.400" cy="508.1" r="3.450"/><circle cx="1011.400" cy="514.7" r="3.450"/><circle cx="1011.400" cy="521.3" r="3.450"/><circle cx="1011.400" cy="527.9" r="3.450"/><circle cx="1011.400" cy="534.5" r="3.450"/><circle cx="1017.100" cy="466.8" r="3.450"/><circle cx="1017.100" cy="475.8" r="3.450"/><circle cx="1017.100" cy="484.9" r="3.450"/><circle cx="1017.100" cy="493.9" r="3.450"/><circle cx="1017.100" cy="502.9" r="3.450"/><circle cx="1017.100" cy="511.9" r="3.450"/><circle cx="1017.100" cy="521.0" r="3.450"/><circle cx="1017.100" cy="530.0" r="3.450"/></g>
<g fill="#000"><circle cx="952" cy="466.9" r=".8"/><circle cx="952" cy="475.8" r=".8"/><circle cx="952" cy="484.8" r=".8"/><circle cx="952" cy="493.7" r=".8"/><circle cx="952" cy="502.7" r=".8"/><circle cx="952" cy="511.6" r=".8"/><circle cx="952" cy="520.5" r=".8"/><circle cx="952" cy="529.5" r=".8"/><circle cx="957.600" cy="462.3" r=".8"/><circle cx="957.600" cy="468.8" r=".8"/><circle cx="957.600" cy="475.4" r=".8"/><circle cx="957.600" cy="481.9" r=".8"/><circle cx="957.600" cy="488.5" r=".8"/><circle cx="957.600" cy="495.0" r=".8"/><circle cx="957.600" cy="501.5" r=".8"/><circle cx="957.600" cy="508.1" r=".8"/><circle cx="957.600" cy="514.6" r=".8"/><circle cx="957.600" cy="521.2" r=".8"/><circle cx="957.600" cy="527.7" r=".8"/><circle cx="957.600" cy="534.2" r=".8"/><circle cx="1017.100" cy="466.8" r=".9"/><circle cx="1017.100" cy="475.8" r=".9"/><circle cx="1017.100" cy="484.9" r=".9"/><circle cx="1017.100" cy="493.9" r=".9"/><circle cx="1017.100" cy="502.9" r=".9"/><circle cx="1017.100" cy="511.9" r=".9"/><circle cx="1017.100" cy="521.0" r=".9"/><circle cx="1017.100" cy="530.0" r=".9"/></g>
<path d="M1009.8 460.3l3.200 3.200M1013.0 460.3l-3.200 3.200M1009.8 466.9l3.200 3.200M1013.0 466.9l-3.200 3.200M1009.8 473.5l3.200 3.200M1013.0 473.5l-3.200 3.200M1009.8 480.1l3.200 3.200M1013.0 480.1l-3.200 3.200M1009.8 486.7l3.200 3.200M1013.0 486.7l-3.200 3.200M1009.8 493.3l3.200 3.200M1013.0 493.3l-3.200 3.200M1009.8 499.9l3.200 3.200M1013.0 499.9l-3.200 3.200M1009.8 506.5l3.200 3.200M1013.0 506.5l-3.200 3.200M1009.8 513.1l3.200 3.200M1013.0 513.1l-3.200 3.200M1009.8 519.7l3.200 3.200M1013.0 519.7l-3.200 3.200M1009.8 526.3l3.200 3.200M1013.0 526.3l-3.200 3.200M1009.8 532.9l3.200 3.200M1013.0 532.9l-3.200 3.200" stroke="#000" stroke-width=".8" fill="none"/>
<path d="M961.300 456.400V538M1007.600 456.400V538" stroke="#000" stroke-width="1.100"/>
<path d="M984.500 463.500V497H1019.500" fill="none" stroke="#f00" stroke-width="1.100"/>
<circle cx="984.500" cy="462" r="1.300" fill="none" stroke="#f00" stroke-width=".9"/>
<circle cx="1020.300" cy="497" r="1" fill="none" stroke="#f00" stroke-width=".8"/>
</svg>
<svg class="a" style="left:0;top:0;pointer-events:none" width="1244" height="612" viewBox="0 0 1244 612">
<polygon points="216.9,143.5 221.5,138.9 226.1,143.5 226.1,146.3 221.5,141.7 216.9,146.3" fill="#5a5a5a"/><polygon points="216.9,437.4 221.5,442.0 226.1,437.4 226.1,434.6 221.5,439.2 216.9,434.6" fill="#5a5a5a"/><polygon points="28.5,454.9 23.9,459.5 28.5,464.1 31.3,464.1 26.7,459.5 31.3,454.9" fill="#5a5a5a"/><polygon points="199.5,454.9 204.1,459.5 199.5,464.1 196.7,464.1 201.3,459.5 196.7,454.9" fill="#5a5a5a"/>
<polygon points="216.9,488.9 221.5,484.3 226.1,488.9 226.1,491.7 221.5,487.1 216.9,491.7" fill="#5a5a5a"/><polygon points="216.9,593.4 221.5,598.0 226.1,593.4 226.1,590.6 221.5,595.2 216.9,590.6" fill="#5a5a5a"/>
<polygon points="708.9,143.5 713.5,138.9 718.1,143.5 718.1,146.3 713.5,141.7 708.9,146.3" fill="#5a5a5a"/><polygon points="708.9,593.4 713.5,598.0 718.1,593.4 718.1,590.6 713.5,595.2 708.9,590.6" fill="#5a5a5a"/>
</svg>
<div class="a" id="bt"></div><div class="a" id="bl"></div><div class="a" id="br"></div><div class="a" id="bb"></div>
</body></html>
